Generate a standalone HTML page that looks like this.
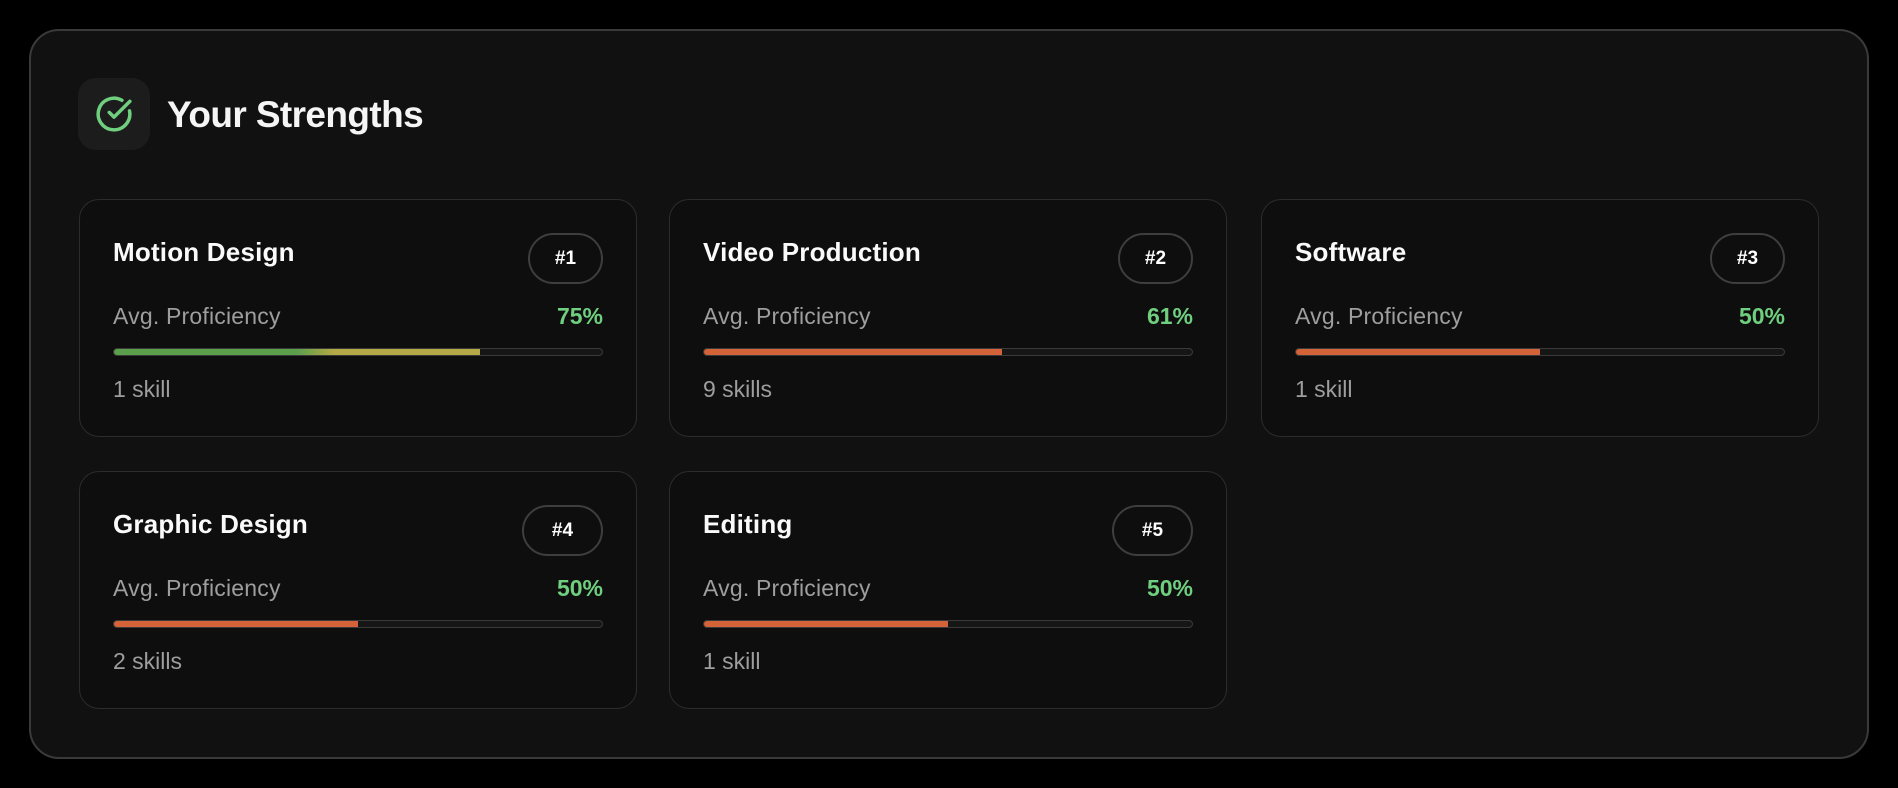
<!DOCTYPE html>
<html><head><meta charset="utf-8"><style>
*{box-sizing:border-box;margin:0;padding:0}
html,body{width:1898px;height:788px;background:#000;overflow:hidden;font-family:"Liberation Sans",sans-serif}
.outer{position:absolute;left:29px;top:29px;width:1840px;height:730px;background:#111;border:2px solid #3a3a3a;border-radius:30px}
.ico{position:absolute;left:78px;top:78px;width:72px;height:72px;border-radius:18px;background:#1c1c1c}
.ico svg{position:absolute;left:17px;top:17px}
.title{position:absolute;left:167px;top:92px;font-size:37px;font-weight:bold;color:#f5f5f5;letter-spacing:-0.6px;line-height:46px}
.card{position:absolute;width:558px;height:238px;background:#0e0e0e;border:1.5px solid #2c2c2c;border-radius:20px}
.card h3{position:absolute;left:33px;top:37px;font-size:26px;font-weight:bold;color:#fafafa;letter-spacing:0.2px}
.badge{position:absolute;right:33px;top:33px;height:51px;border:2px solid #3e3e3e;border-radius:26px;color:#fff;font-weight:bold;font-size:19px;line-height:47px;text-align:center;width:75px}
.lab{position:absolute;left:33px;top:103px;font-size:23px;color:#9e9e9e;letter-spacing:0.2px}
.pct{position:absolute;right:33px;top:103px;font-size:23px;font-weight:bold;color:#6fcf7f}
.bar{position:absolute;left:33px;right:33px;top:148px;height:8px;border:1.5px solid #3a3a3a;border-radius:4px;background:#161616;overflow:hidden}
.bar i{display:block;height:100%;background:#d4633a}
.cnt{position:absolute;left:33px;top:176px;font-size:23px;color:#9e9e9e}
</style></head><body>
<div class="outer"></div>
<div class="ico"><svg width="38" height="38" viewBox="0 0 24 24" fill="none" stroke="#6fcf7f" stroke-width="2.2" stroke-linecap="round" stroke-linejoin="round"><path d="M21.801 10A10 10 0 1 1 17 3.335"/><path d="m9 11 3 3L22 4"/></svg></div>
<div class="title">Your Strengths</div>

<div class="card" style="left:79px;top:199px"><h3>Motion Design</h3><div class="badge">#1</div><div class="lab">Avg. Proficiency</div><div class="pct">75%</div><div class="bar"><i style="width:75%;background:linear-gradient(90deg,#5b9f4c 0%,#5b9f4c 50%,#b5a847 60%,#b5a847 100%)"></i></div><div class="cnt">1 skill</div></div>
<div class="card" style="left:669px;top:199px"><h3>Video Production</h3><div class="badge">#2</div><div class="lab">Avg. Proficiency</div><div class="pct">61%</div><div class="bar"><i style="width:61%"></i></div><div class="cnt">9 skills</div></div>
<div class="card" style="left:1261px;top:199px"><h3>Software</h3><div class="badge">#3</div><div class="lab">Avg. Proficiency</div><div class="pct">50%</div><div class="bar"><i style="width:50%"></i></div><div class="cnt">1 skill</div></div>
<div class="card" style="left:79px;top:471px"><h3>Graphic Design</h3><div class="badge" style="width:81px">#4</div><div class="lab">Avg. Proficiency</div><div class="pct">50%</div><div class="bar"><i style="width:50%"></i></div><div class="cnt">2 skills</div></div>
<div class="card" style="left:669px;top:471px"><h3>Editing</h3><div class="badge" style="width:81px">#5</div><div class="lab">Avg. Proficiency</div><div class="pct">50%</div><div class="bar"><i style="width:50%"></i></div><div class="cnt">1 skill</div></div>
</body></html>
